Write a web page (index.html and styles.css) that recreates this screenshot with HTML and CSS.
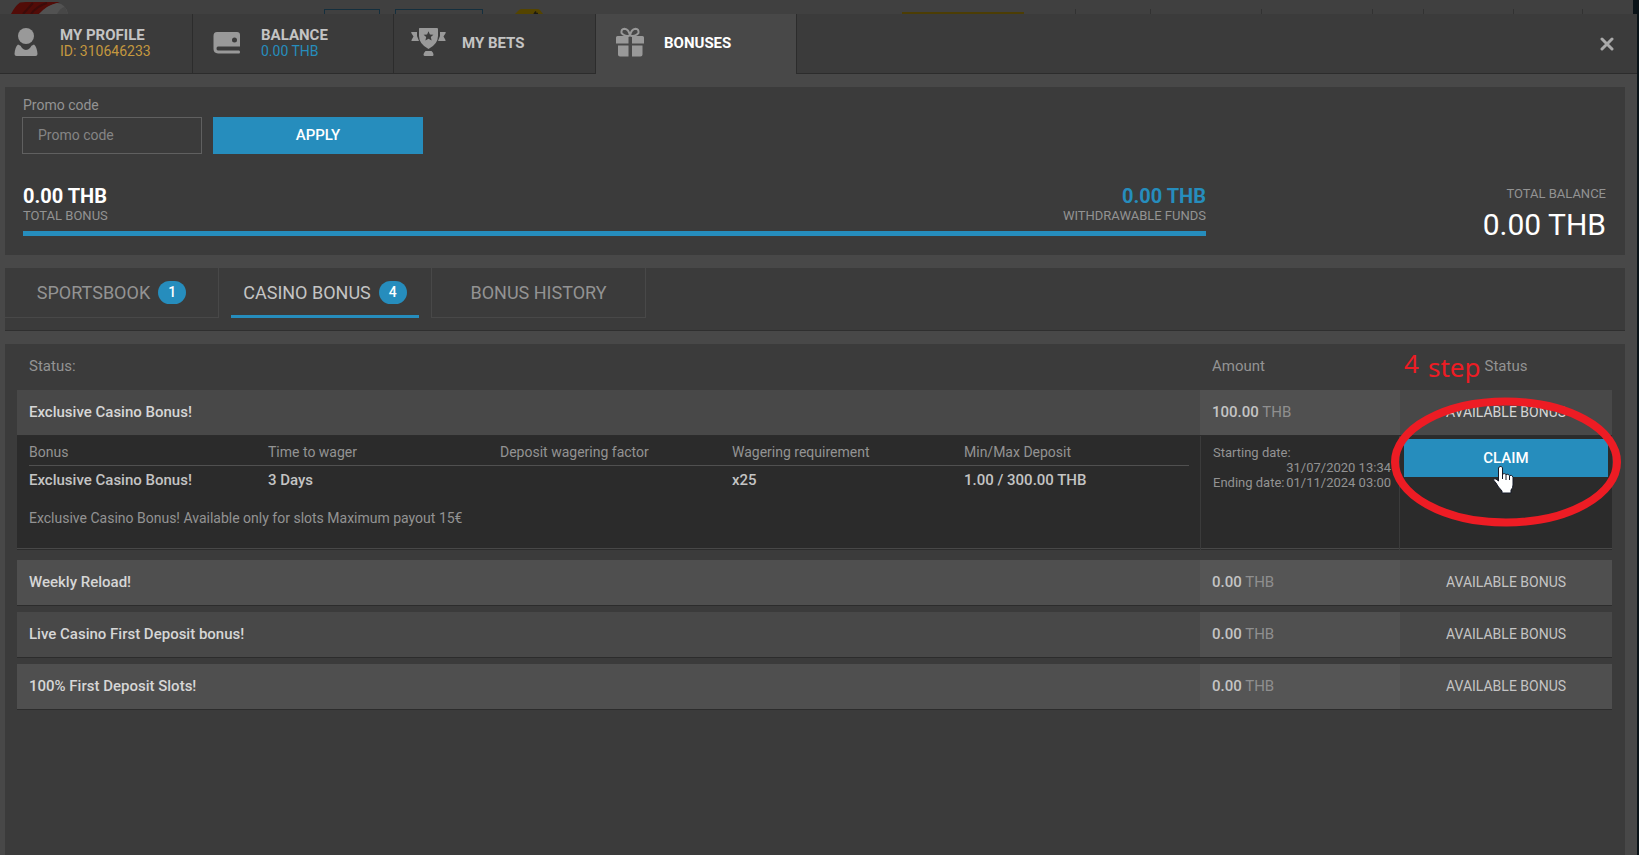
FILE: index.html
```
<!DOCTYPE html>
<html lang="en">
<head>
<meta charset="utf-8">
<title>Bonuses</title>
<link rel="stylesheet" href="styles.css">
</head>
<body>
<div class="page">
  <div class="backdrop" aria-hidden="true">
    <svg class="backdrop-logo" viewBox="0 0 60 14"><path d="M0 14Q4 6 9 2.500L15 2H49L38 6 28 14Z" fill="#520c08"/><path d="M12 14L22 3M20 14Q26 6 36 3" stroke="#3c0c0a" stroke-width="2" fill="none"/><path d="M28 14Q36 5 46 3Q55 4 57 14Z" fill="#525252"/><path d="M46 14Q50 7 54 7L57 14Z" fill="#474747"/></svg>
    <span class="ghost-button ghost-small"></span>
    <span class="ghost-button ghost-large"></span>
    <svg class="ghost-coin" viewBox="0 0 28 5"><path d="M0 5L4 1Q5 0 7 0H22Q24 0 25 1L28 5Z" fill="#544400"/><path d="M19 5L21 2.500M20 4.500H23" fill="none" stroke="#1c1a10" stroke-width="1.500"/></svg>
    <span class="ghost-bar"></span>
    <span class="ghost-ticks"><i></i><i></i><i></i><i></i><i></i><i></i><i></i></span>
  </div>
  <div class="modal">
    <header class="topbar">
      <nav class="tabs">
        <button class="tab tab-first" type="button">
          <svg class="tab-icon" viewBox="0 0 36 36"><circle cx="18" cy="12" r="8"/><path d="M10 20.500Q13 21 14 24Q18 28 22 24Q23 21 26 20.500Q29 23 29.500 30Q29.500 32 27.500 32H8.500Q6.500 32 6.500 30Q7 23 10 20.500Z"/></svg>
          <span class="tab-text"><strong>MY PROFILE</strong><span class="user-id">ID: 310646233</span></span>
        </button>
        <button class="tab" type="button">
          <svg class="tab-icon" viewBox="0 0 36 36"><path fill-rule="evenodd" d="M8 8H28Q31 8 31 11V22.500H9Q7.500 22.500 7.500 24.500T9 26.500H30Q31 26.500 31 28T30 29.500H9Q4.500 29 4.500 25V12Q4.500 8 8 8ZM25.500 13.500A2.500 2.500 0 1 0 25.500 18.500A2.500 2.500 0 1 0 25.500 13.500Z"/></svg>
          <span class="tab-text"><strong>BALANCE</strong><span class="user-balance">0.00 THB</span></span>
        </button>
        <button class="tab tab-bets" type="button">
          <svg class="tab-icon" viewBox="0 0 36 36"><path fill-rule="evenodd" d="M9.500 4H27Q28 4 28 5V12Q28 20 18.500 25Q9 20 9 12V5Q9 4 9.500 4ZM18.500 7.200L17.100 10.400 13.600 10.700 16.200 13 15.400 16.500 18.500 14.700 21.600 16.500 20.800 13 23.400 10.700 19.900 10.400Z"/><path d="M1.500 8H7V12L9 17H2Q1 17 1.500 16L3.500 12.500 1.300 9Q1 8 1.500 8ZM35.300 8H30V12L28 17H35Q36 17 35.500 16L33.500 12.500 35.700 9Q36 8 35.300 8ZM15.500 27H21.500Q23.500 28.500 23.500 30.500T22 32H15Q13.500 32 13.500 30.500T15.500 27Z"/></svg>
          <span class="tab-text"><strong>MY BETS</strong></span>
        </button>
        <button class="tab tab-active" type="button" aria-current="page">
          <svg class="tab-icon" viewBox="0 0 36 36"><path d="M5.500 12H16.500V19.500H4V13.500Q4 12 5.500 12ZM20 12H30.500Q32 12 32 13.500V19.500H20ZM6 21.500H16.500V32.500H8Q6 32.500 6 30.500ZM20 21.500H30.500V30.500Q30.500 32.500 28.500 32.500H20Z"/><path class="ribbon" d="M17.500 12Q11.500 12 9.500 9Q9 5 12.500 4.700Q17 5 18 12M18.500 12Q24.500 12 26.500 9Q27 5 23.500 4.700Q19 5 18 12"/></svg>
          <span class="tab-text"><strong>BONUSES</strong></span>
        </button>
      </nav>
      <button class="close" type="button" aria-label="Close">
        <svg class="close-icon" viewBox="0 0 14 14"><path d="M2 2L12 12M12 2L2 12"/></svg>
      </button>
    </header>
    <main class="content">
      <section class="panel summary">
        <form class="promo">
          <div class="promo-field">
            <label for="promo">Promo code</label>
            <input id="promo" type="text" placeholder="Promo code">
          </div>
          <button class="button apply" type="button">APPLY</button>
        </form>
        <div class="totals">
          <div class="funds">
            <div class="fund"><strong>0.00 THB</strong><span class="caption">TOTAL BONUS</span></div>
            <div class="fund fund-right"><strong>0.00 THB</strong><span class="caption">WITHDRAWABLE FUNDS</span></div>
          </div>
          <div class="balance"><span class="caption">TOTAL BALANCE</span><span class="balance-value">0.00 THB</span></div>
        </div>
      </section>
      <nav class="panel subtabs">
        <button class="subtab" type="button">SPORTSBOOK <span class="badge">1</span></button>
        <button class="subtab subtab-active" type="button" aria-current="page">CASINO BONUS <span class="badge">4</span></button>
        <button class="subtab subtab-last" type="button">BONUS HISTORY</button>
      </nav>
      <section class="panel list">
        <table class="bonuses">
          <colgroup><col><col class="col-amount"><col class="col-status"></colgroup>
          <thead><tr><th>Status:</th><th>Amount</th><th class="center">Status</th></tr></thead>
          <tbody>
            <tr class="row row-open"><td>Exclusive Casino Bonus!</td><td class="amount"><b>100.00</b> THB</td><td class="state">AVAILABLE BONUS</td></tr>
            <tr class="detail">
              <td class="detail-main">
                <table class="terms">
                  <thead><tr><th class="term-first">Bonus</th><th>Time to wager</th><th>Deposit wagering factor</th><th>Wagering requirement</th><th class="term-last">Min/Max Deposit</th></tr></thead>
                  <tbody><tr><td>Exclusive Casino Bonus!</td><td>3 Days</td><td></td><td>x25</td><td>1.00 / 300.00 THB</td></tr></tbody>
                </table>
                <p class="note">Exclusive Casino Bonus! Available only for slots Maximum payout 15€</p>
              </td>
              <td class="detail-dates">
                <div>Starting date:</div>
                <div class="date">31/07/2020 13:34</div>
                <div class="ending"><span>Ending date:</span><span>01/11/2024 03:00</span></div>
              </td>
              <td class="detail-claim">
                <div class="claim-area">
                  <button class="button claim" type="button">CLAIM</button>
                  <span class="step step-number">4</span>
                  <span class="step step-word">step</span>
                  <svg class="ring" viewBox="0 0 230 130"><ellipse cx="115" cy="65" rx="111" ry="60.500"/></svg>
                  <svg class="cursor" viewBox="0 0 22 30"><path d="M7 2Q9 0.500 10.500 2.500V9Q13 8 14 9.500Q16 8.500 17.500 10.500Q20 9.500 21 12V20Q21 23 19 25V28H10V26Q6 22 4 18L1.500 15Q1.500 13 4 14L6.500 16V3Z"/><path d="M10.500 9V14M14 10V15M17.500 11V15"/></svg>
                </div>
              </td>
            </tr>
            <tr class="row row-light row-after-detail"><td>Weekly Reload!</td><td class="amount"><b>0.00</b> THB</td><td class="state">AVAILABLE BONUS</td></tr>
            <tr class="row row-spaced"><td>Live Casino First Deposit bonus!</td><td class="amount"><b>0.00</b> THB</td><td class="state">AVAILABLE BONUS</td></tr>
            <tr class="row row-light row-spaced"><td>100% First Deposit Slots!</td><td class="amount"><b>0.00</b> THB</td><td class="state">AVAILABLE BONUS</td></tr>
          </tbody>
        </table>
      </section>
    </main>
  </div>
</div>
</body>
</html>
```
FILE: styles.css
```
* { box-sizing: border-box; }

body {
  margin: 0;
  background: #0a1318;
  color: #939393;
  font-family: Roboto, "Liberation Sans", sans-serif;
  font-size: 15px;
}

button, input { font: inherit; color: inherit; }
button { border: 0; padding: 0; background: none; cursor: pointer; }

.page {
  display: flex;
  flex-direction: column;
  min-height: 100vh;
}

/* Dimmed site header peeking out above the dialog */
.backdrop {
  position: relative;
  height: 14px;
  margin-right: 6px;
  overflow: hidden;
  background: #404040;
}
.backdrop-logo { position: absolute; left: 11px; top: 0; width: 60px; height: 14px; }
.ghost-button { position: absolute; top: 9px; height: 8px; border: 1px solid #142f3e; }
.ghost-small { left: 324px; width: 56px; }
.ghost-large { left: 395px; width: 88px; }
.ghost-coin { position: absolute; left: 515px; top: 9px; width: 28px; height: 5px; }
.ghost-bar { position: absolute; left: 902px; top: 12px; width: 122px; height: 2px; background: #4c3d04; }
.ghost-ticks i { position: absolute; top: 9px; width: 1px; height: 5px; background: #323232; }
.ghost-ticks i:nth-child(1) { left: 1075px; }
.ghost-ticks i:nth-child(2) { left: 1150px; }
.ghost-ticks i:nth-child(3) { left: 1261px; }
.ghost-ticks i:nth-child(4) { left: 1372px; }
.ghost-ticks i:nth-child(5) { left: 1423px; }
.ghost-ticks i:nth-child(6) { left: 1513px; }
.ghost-ticks i:nth-child(7) { left: 1582px; }

.modal {
  flex: 1;
  display: flex;
  flex-direction: column;
  margin-right: 2px;
  background: #484848;
}

.topbar {
  display: flex;
  justify-content: space-between;
  height: 60px;
  background: #3b3b3b;
  box-shadow: inset 0 -1px #2c2c2c;
}
.tabs { display: flex; }
.tab {
  display: flex;
  align-items: center;
  gap: 16px;
  width: 201px;
  padding: 0 0 5px 16px;
  border-right: 1px solid #2c2c2c;
  color: #c4c4c4;
  text-align: left;
}
.tab-first { width: 193px; padding-left: 8px; }
.tab-bets { width: 202px; }
.tab-active { background: #484848; color: #fff; }
.tab-icon { width: 36px; height: 36px; fill: #999; }
.ribbon { fill: none; stroke: #999; stroke-width: 2; }
.tab-text { display: flex; flex-direction: column; padding-top: 2px; line-height: 16px; }
.tab-text strong { font-weight: 700; }
.user-id { color: #c4983f; font-size: 14px; }
.user-balance { color: #268dbd; font-size: 14px; }
.close { padding: 0 23px; }
.close-icon { display: block; width: 14px; height: 14px; fill: none; stroke: #aaa; stroke-width: 3; stroke-linecap: round; }

.content {
  flex: 1;
  display: flex;
  flex-direction: column;
  gap: 13px;
  padding: 13px 12px 0 5px;
}
.panel { background: #3b3b3b; }

.summary { padding: 10px 19px 14px 17px; }
.promo { display: flex; align-items: flex-end; gap: 11px; }
.promo-field { display: flex; flex-direction: column; gap: 4px; font-size: 14px; line-height: 16px; }
.promo-field label { padding-left: 1px; }
.promo-field input {
  width: 180px;
  height: 37px;
  padding: 0 15px 2px;
  border: 1px solid #606060;
  background: transparent;
}
.promo-field input::placeholder { color: #858585; opacity: 1; }
.button { background: #268dbd; color: #fff; font-weight: 500; text-align: center; }
.apply { width: 210px; height: 37px; padding-bottom: 2px; }

.totals { display: flex; margin-top: 30px; padding-left: 1px; }
.funds {
  flex: 1;
  display: flex;
  justify-content: space-between;
  height: 52px;
  border-bottom: 5px solid #268dbd;
}
.fund { display: flex; flex-direction: column; }
.fund strong { color: #fff; font-size: 20px; line-height: 24px; }
.fund-right { text-align: right; }
.fund-right strong { color: #268dbd; }
.caption { font-size: 13px; line-height: 16px; }
.balance { display: flex; flex-direction: column; gap: 7px; width: 400px; padding-top: 2px; text-align: right; }
.balance-value { color: #fff; font-size: 30px; line-height: 32px; }

.subtabs { display: flex; gap: 12px; height: 63px; box-shadow: inset 0 -1px #2f2f2f; }
.subtab {
  display: flex;
  align-items: center;
  justify-content: center;
  gap: 8px;
  width: 214px;
  height: 50px;
  border-right: 1px solid #484848;
  border-bottom: 1px solid #484848;
  font-size: 18px;
}
.subtab-active { width: 188px; padding-top: 2px; border-right: 0; border-bottom: 3px solid #268dbd; color: #c4c4c4; }
.subtab-last { width: 215px; border-left: 1px solid #484848; }
.badge {
  width: 28px;
  border-radius: 12px;
  background: #268dbd;
  color: #fff;
  font-size: 14px;
  font-weight: 500;
  line-height: 23px;
}

.list { flex: 1; padding: 0 13px 0 12px; }
table { width: 100%; border-collapse: separate; border-spacing: 0; }
th { font-weight: 400; text-align: left; }
td { padding: 0; }
.bonuses { table-layout: fixed; }
.bonuses > thead th { height: 46px; padding: 0 12px 2px; }
.bonuses > thead .center { text-align: center; }
.col-amount { width: 200px; }
.col-status { width: 212px; }

.row td {
  height: 46px;
  padding: 0 12px 2px;
  background: #484848;
  box-shadow: inset 0 -1px #2c2c2c;
  color: #d6d6d6;
  font-weight: 500;
}
.row .amount { background: #505050; color: #8f8f8f; font-weight: 400; }
.row .amount b { color: #c4c4c4; font-weight: 500; }
.row .state { color: #c4c4c4; font-size: 14px; font-weight: 400; text-align: center; }
.row-open .state { color: #d6d6d6; }
.row-light td { background: #4f4f4f; }
.row-light .amount { background: #555; }
.row-spaced td { height: 52px; border-top: 6px solid #3b3b3b; }
.row-after-detail td { height: 56px; border-top: 10px solid #3b3b3b; }

.detail > td {
  height: 114px;
  background: #2b2b2b;
  box-shadow: inset 0 -1px #2c2c2c, inset 0 -2px #484848;
  vertical-align: top;
}
.detail-main { padding: 3px 11px 0 12px; }
.terms th { width: 20%; height: 27px; border-bottom: 1px solid #505050; padding: 0; font-size: 14px; }
.terms .term-first { width: 239px; }
.terms .term-last { width: 225px; }
.terms td { height: 27px; color: #c4c4c4; font-weight: 500; }
.note { margin: 17px 0 0; font-size: 14px; line-height: 16px; }
.detail > .detail-dates {
  padding: 9px 8px 0 12px;
  border-left: 1px solid #3b3b3b;
  border-right: 1px solid #3b3b3b;
  font-size: 13px;
  line-height: 15px;
}
.date { text-align: right; }
.ending { display: flex; justify-content: space-between; white-space: nowrap; }
.detail-claim { padding: 3px 4px; }
.claim-area { position: relative; }
.claim { display: block; width: 100%; height: 38px; }

/* Hand-drawn annotations laid over the claim cell */
.step { position: absolute; color: #ed1c24; font-family: "Noto Sans", "Open Sans", sans-serif; font-size: 26px; line-height: 32px; }
.step-number { left: 0; top: -92px; }
.step-word { left: 24px; top: -88px; }
.ring { position: absolute; left: -13px; top: -42px; width: 230px; height: 130px; fill: none; stroke: #ed1c24; stroke-width: 8; pointer-events: none; }
.cursor { position: absolute; left: 88px; top: 26px; width: 22px; height: 30px; fill: #fff; stroke: #151a28; stroke-width: 1; }
```
